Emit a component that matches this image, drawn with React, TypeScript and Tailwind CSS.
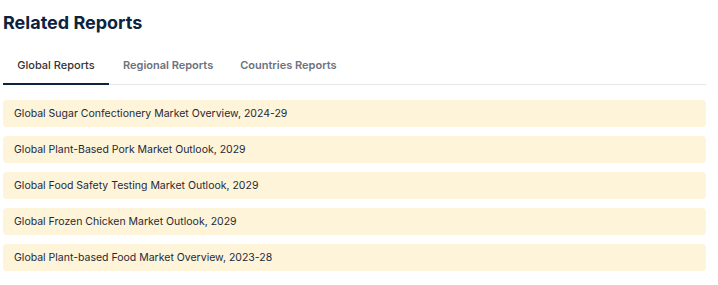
import React from "react";

const items = [
  "Global Sugar Confectionery Market Overview, 2024-29",
  "Global Plant-Based Pork Market Outlook, 2029",
  "Global Food Safety Testing Market Outlook, 2029",
  "Global Frozen Chicken Market Outlook, 2029",
  "Global Plant-based Food Market Overview, 2023-28",
];

export default function App() {
  return (
    <div className="w-[718px] h-[285px] bg-white pl-[3px] pt-[11px]" style={{ fontFamily: "Inter, sans-serif" }}>
      <div className="w-[703px]">
        <h2 className="text-[18px] leading-[24px] font-bold text-[#0c2340]">Related Reports</h2>
        <div className="mt-[23px] flex border-b border-[#e5e7eb]">
          <div className="w-[106px] text-center text-[11px] leading-[14px] font-medium text-[#333333] pb-[11px] border-b-2 border-[#0c2340] -mb-px">Global Reports</div>
          <div className="pl-[14px] pr-[13px] text-[11px] leading-[14px] font-semibold text-[#6b7280] pb-[11px]">Regional Reports</div>
          <div className="px-[14px] text-[11px] leading-[14px] font-semibold text-[#6b7280] pb-[11px]">Countries Reports</div>
        </div>
        <div className="mt-[15px] flex flex-col gap-[9px]">
          {items.map((t) => (
            <div key={t} className="h-[27px] flex items-center rounded-[4px] bg-[#fef4d9] px-[11px] text-[10.5px] text-[#1f2937]">
              {t}
            </div>
          ))}
        </div>
      </div>
    </div>
  );
}
